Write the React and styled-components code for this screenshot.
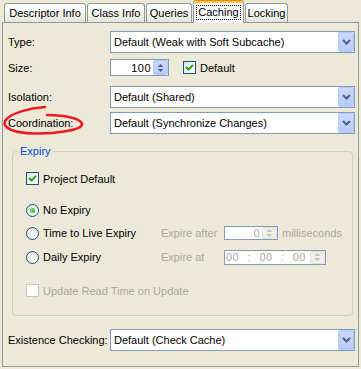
import React from 'react'
import styled, { createGlobalStyle } from 'styled-components'

const GlobalStyle = createGlobalStyle`
	html, body {
		margin: 0;
		padding: 0;
		background: #ece9d8;
	}
	body {
		font-family: "Liberation Sans", Arial, sans-serif;
		font-size: 11px;
		color: #000;
	}
	* {
		box-sizing: border-box;
	}
`

const tabs = [
	{ label: 'Descriptor Info', w: 82 },
	{ label: 'Class Info', w: 58 },
	{ label: 'Queries', w: 46 },
	{ label: 'Caching', w: 51, active: true },
	{ label: 'Locking', w: 43 },
]

function Chevron() {
	return (
		<svg width="9" height="6" viewBox="0 0 9 6">
			<path d="M1 1 L4.5 4.5 L8 1" fill="none" stroke="#4d6185" strokeWidth="2" />
		</svg>
	)
}

function Arrows({ disabled }) {
	const c = disabled ? '#c9c7ba' : '#4d6185'
	return (
		<svg width="7" height="10" viewBox="0 0 7 10">
			<path d="M0.5 4 L3.5 1 L6.5 4 Z" fill={c} />
			<path d="M0.5 6 L3.5 9 L6.5 6 Z" fill={c} />
		</svg>
	)
}

function Combo({ children }) {
	return (
		<ComboBox>
			<ComboText>{children}</ComboText>
			<ComboButton>
				<Chevron />
			</ComboButton>
		</ComboBox>
	)
}

function Spin({ w, h, disabled, children }) {
	return (
		<SpinBox $w={w} $h={h} $disabled={disabled}>
			<SpinValue $disabled={disabled}>{children}</SpinValue>
			<SpinButton $disabled={disabled}>
				<Arrows disabled={disabled} />
			</SpinButton>
		</SpinBox>
	)
}

function Check({ checked, disabled }) {
	return (
		<CheckBox $disabled={disabled}>
			{checked && (
				<svg width="9" height="9" viewBox="0 0 9 9">
					<path d="M1 4 L3.5 6.5 L8 2" fill="none" stroke="#21a121" strokeWidth="2" />
				</svg>
			)}
		</CheckBox>
	)
}

function App() {
	return (
		<Frame>
			<GlobalStyle />
			<TabBar>
				{tabs.map(t => (
					<Tab key={t.label} $w={t.w} $active={t.active}>
						{t.active ? <Focus>{t.label}</Focus> : t.label}
					</Tab>
				))}
			</TabBar>

			<Panel>
				<FieldRow>
					<span>Type:</span>
					<Combo>Default (Weak with Soft Subcache)</Combo>
				</FieldRow>
				<FieldRow $h={17} $mt={6}>
					<span>Size:</span>
					<SizeCell>
						<Spin w={59} h={17}>100</Spin>
						<Option>
							<Check checked />
							Default
						</Option>
					</SizeCell>
				</FieldRow>
				<FieldRow $mt={10}>
					<span>Isolation:</span>
					<Combo>Default (Shared)</Combo>
				</FieldRow>
				<FieldRow $mt={4}>
					<span>Coordination:</span>
					<Combo>Default (Synchronize Changes)</Combo>
				</FieldRow>

				<Group>
					<Legend>Expiry</Legend>
					<Option $mt={13} $h={15}>
						<Check checked />
						Project Default
					</Option>
					<Option $mt={16}>
						<Radio $checked />
						No Expiry
					</Option>
					<TimeRow $mt={7}>
						<Option>
							<Radio />
							Time to Live Expiry
						</Option>
						<Muted>Expire after</Muted>
						<Spin w={54} h={14} disabled>0</Spin>
						<Unit>milliseconds</Unit>
					</TimeRow>
					<TimeRow $mt={8}>
						<Option>
							<Radio />
							Daily Expiry
						</Option>
						<Muted>Expire at</Muted>
						<Spin w={102} h={15} disabled>
							<TimeParts>
								<span>00</span>
								<span>:</span>
								<span>00</span>
								<span>:</span>
								<span>00</span>
							</TimeParts>
						</Spin>
					</TimeRow>
					<Option $mt={18} $h={15}>
						<Check disabled />
						<Muted>Update Read Time on Update</Muted>
					</Option>
				</Group>

				<FieldRow $mt={13}>
					<span>Existence Checking:</span>
					<Combo>Default (Check Cache)</Combo>
				</FieldRow>
			</Panel>

			<Annotation width="361" height="369" viewBox="0 0 361 369">
				<path
					d="M45 107 C30 108 10 113 5 121 C2 128 14 133 34 133.5 C56 134 80 130 82 125 C83 119 66 115 47 115"
					fill="none"
					stroke="#ec1c24"
					strokeWidth="2.6"
					strokeLinecap="round"
				/>
			</Annotation>
		</Frame>
	)
}

export default App

const Frame = styled.div`
	position: relative;
	width: 361px;
	height: 369px;
	padding-left: 2px;
	background: #ece9d8;
	overflow: hidden;
`

const TabBar = styled.div`
	position: relative;
	z-index: 1;
	display: flex;
	align-items: flex-end;
	gap: 1px;
	height: 22px;
	padding-left: 2px;
`

const Tab = styled.div`
	width: ${p => p.$w}px;
	height: ${p => (p.$active ? 23 : 19)}px;
	margin-bottom: ${p => (p.$active ? -1 : 0)}px;
	display: flex;
	align-items: center;
	justify-content: center;
	border: 1px solid #919b9c;
	border-bottom: none;
	border-radius: 3px 3px 0 0;
	white-space: nowrap;
	background: ${p => (p.$active ? '#fcfcfe' : 'linear-gradient(#ffffff, #f4f4f0 55%, #e4e4dc)')};
	${p => p.$active && `
		border-top: 1px solid #e68b2c;
		box-shadow: inset 0 2px 0 #ffc83c;
		padding-top: 1px;
	`}
`

const Focus = styled.span`
	outline: 1px dotted #000;
	padding: 0 1px;
	line-height: 13px;
`

const Panel = styled.div`
	width: 357px;
	height: 345px;
	border: 1px solid #919b9c;
	padding: 8px 3px 0 5px;
	background: #ece9d8;
`

const FieldRow = styled.div`
	display: grid;
	grid-template-columns: 102px 1fr;
	align-items: center;
	height: ${p => p.$h || 22}px;
	margin-top: ${p => p.$mt || 0}px;
	white-space: nowrap;
`

const ComboBox = styled.div`
	display: flex;
	align-items: center;
	height: 22px;
	border: 1px solid #7f9db9;
	background: #fff;
	padding: 0 0 0 3px;
`

const ComboText = styled.span`
	flex: 1;
`

const ComboButton = styled.div`
	width: 16px;
	height: 20px;
	display: flex;
	align-items: center;
	justify-content: center;
	border: 1px solid #b4c7f5;
	border-radius: 2px;
	background: linear-gradient(#cbd8fc, #b8cbf8);
`

const SizeCell = styled.div`
	display: flex;
	align-items: center;
	gap: 14px;
`

const SpinBox = styled.div`
	display: flex;
	width: ${p => p.$w}px;
	height: ${p => p.$h}px;
	border: 1px solid #7f9db9;
	background: #fff;
	color: ${p => (p.$disabled ? '#aca899' : '#000')};
`

const SpinValue = styled.div`
	flex: 1;
	display: flex;
	align-items: center;
	justify-content: flex-end;
	padding-right: 2px;
	letter-spacing: 0.5px;
`

const SpinButton = styled.div`
	width: 15px;
	display: flex;
	align-items: center;
	justify-content: center;
	border-radius: 2px;
	background: ${p => (p.$disabled ? '#f0efe9' : 'linear-gradient(#cbd8fc, #b8cbf8)')};
	border: 1px solid ${p => (p.$disabled ? '#e3e1d8' : '#b4c7f5')};
`

const TimeParts = styled.div`
	flex: 1;
	display: flex;
	justify-content: space-between;
	padding: 0 2px 0 1px;
`

const Option = styled.div`
	display: flex;
	align-items: center;
	gap: 4px;
	height: ${p => p.$h || 16}px;
	margin-top: ${p => p.$mt || 0}px;
	white-space: nowrap;
`

const CheckBox = styled.div`
	width: 13px;
	height: 13px;
	display: flex;
	align-items: center;
	justify-content: center;
	border: 1px solid ${p => (p.$disabled ? '#cac8bb' : '#1c5180')};
	background: ${p => (p.$disabled ? '#fff' : 'linear-gradient(135deg, #dcdcd7, #ffffff 70%)')};
`

const Radio = styled.div`
	width: 13px;
	height: 13px;
	border-radius: 50%;
	border: 1px solid #1c5180;
	background: radial-gradient(circle at 65% 65%, #ffffff 20%, #dcdcd7 90%);
	display: flex;
	align-items: center;
	justify-content: center;
	&::after {
		content: '';
		display: ${p => (p.$checked ? 'block' : 'none')};
		width: 5px;
		height: 5px;
		border-radius: 50%;
		background: radial-gradient(circle at 35% 35%, #6ee36a, #21a121);
	}
`

const Group = styled.fieldset`
	margin: 11px 2px 0 4px;
	padding: 0 0 17px 13px;
	border: 1px solid #d0d0bf;
	border-radius: 4px;
	min-width: 0;
`

const Legend = styled.legend`
	color: #0046d5;
	padding: 0 2px;
	margin-left: -8px;
	line-height: 13px;
`

const TimeRow = styled.div`
	display: grid;
	grid-template-columns: 135px 63px auto 1fr;
	align-items: center;
	height: 16px;
	margin-top: ${p => p.$mt || 0}px;
	white-space: nowrap;
`

const Muted = styled.span`
	color: #aca899;
`

const Unit = styled(Muted)`
	margin-left: 4px;
`

const Annotation = styled.svg`
	position: absolute;
	top: 0;
	left: 0;
	pointer-events: none;
`
